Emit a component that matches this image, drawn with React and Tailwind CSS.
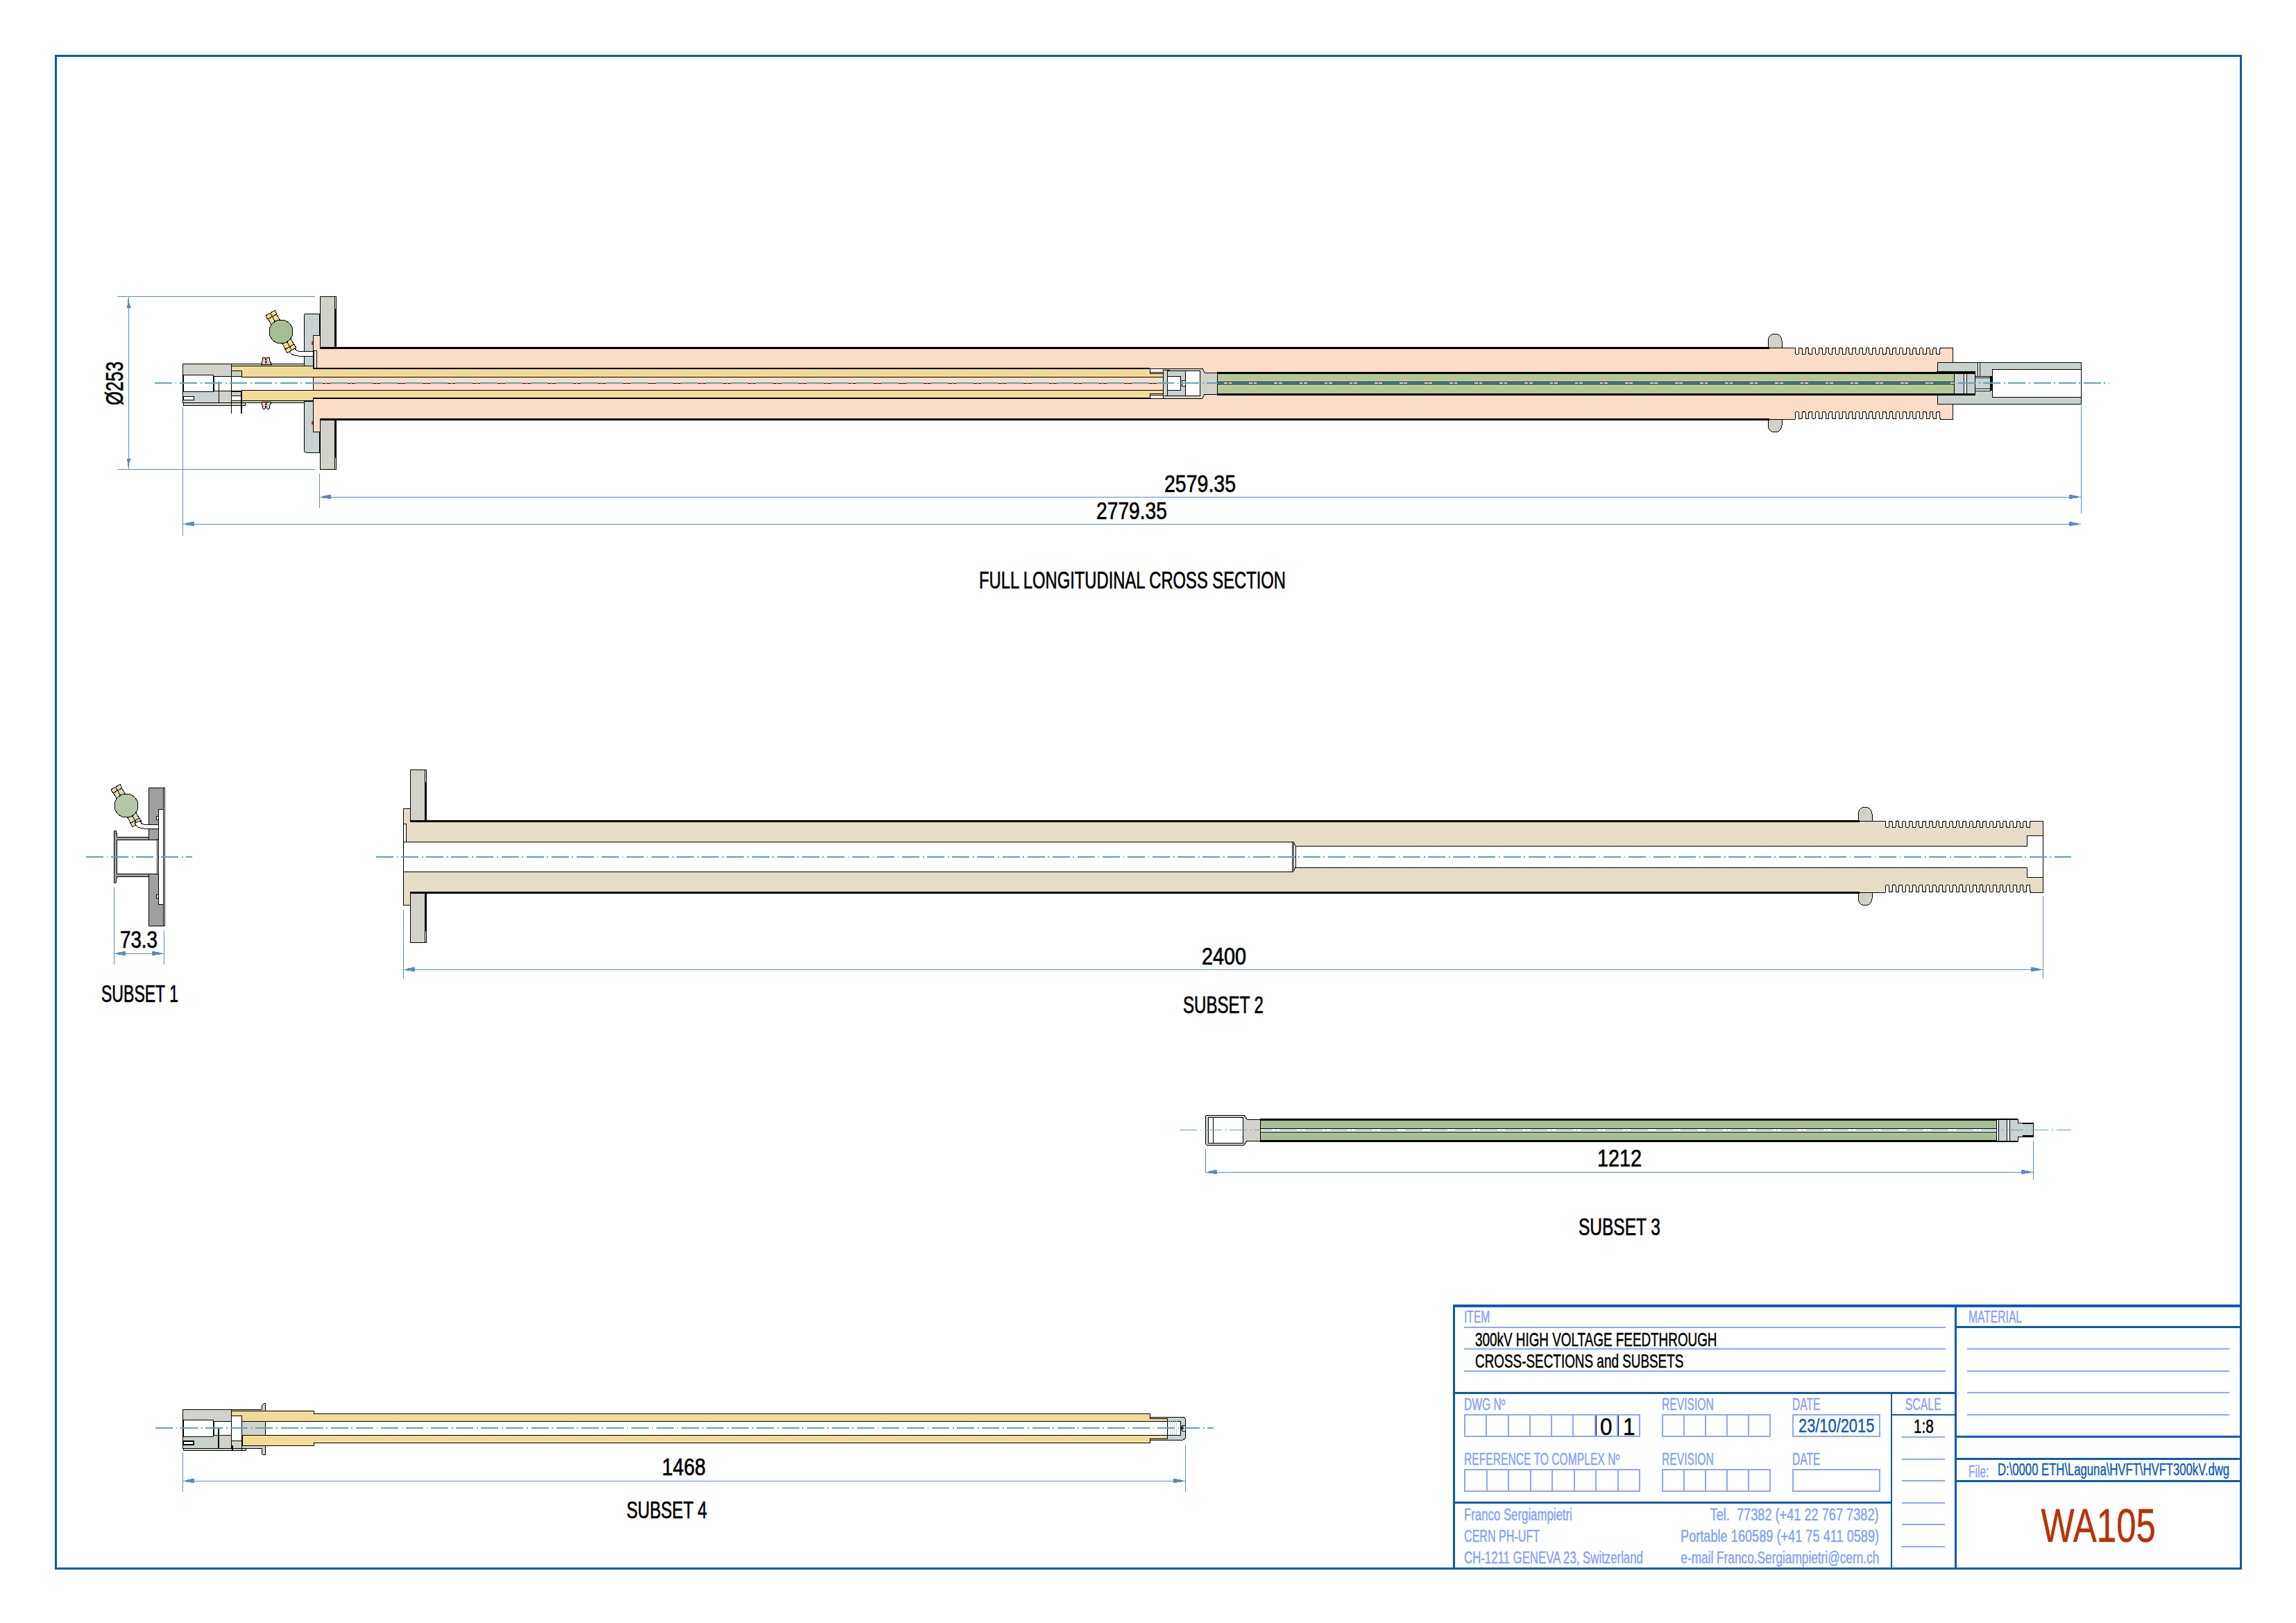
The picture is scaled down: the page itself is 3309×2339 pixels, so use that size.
const INK = "#000000";
const DIM = "#5b8cbf";
const AXIS = "#5ba3bb";
const PEACH = "#fbdcc8";
const YELLOW = "#f0dc96";
const GREEN = "#b4c896";
const OLIVE = "#a8bc96";
const GREY = "#d2d2ca";
const STEEL = "#c8d2d2";
const SAGE = "#c8d2ca";
const BEIGE = "#e6dcc8";

// thread profile, runs left to right, d is the signed depth
function teeth(x, y, n, p, d) {
  const r = p / 4;
  const s = d > 0 ? 1 : -1;
  let out = "";
  for (let i = 0; i < n; i++) {
    const a = x + i * p;
    out += ` L${a} ${y + d - s * r} A${r} ${r} 0 0 ${d > 0 ? 0 : 1} ${a + p / 2} ${y + d - s * r} L${a + p / 2} ${y + s * r}`;
    if (i < n - 1) out += ` A${r} ${r} 0 0 ${d > 0 ? 1 : 0} ${a + p} ${y + s * r}`;
    else out += ` L${a + p / 2 + 1} ${y}`;
  }
  return out;
}

function CenterLine({ x1, x2, y, w = 2 }) {
  return <line x1={x1} x2={x2} y1={y} y2={y} stroke={AXIS} strokeWidth={w} strokeDasharray="25 4.7 1.7 4.7" />;
}

function HDim({ x1, x2, y }) {
  return (
    <g fill={DIM}>
      <line x1={x1} x2={x2} y1={y} y2={y} stroke={DIM} strokeWidth="1" />
      <polygon points={`${x1},${y} ${x1 + 7},${y - 1} ${x1 + 7},${y - 2} ${x1 + 17},${y - 3} ${x1 + 17},${y + 3} ${x1 + 7},${y + 2}`} />
      <polygon points={`${x2},${y} ${x2 - 7},${y - 1} ${x2 - 7},${y - 2} ${x2 - 17},${y - 3} ${x2 - 17},${y + 3} ${x2 - 7},${y + 2}`} />
    </g>
  );
}

function Ext({ x, y1, y2 }) {
  return <line x1={x} x2={x} y1={y1} y2={y2} stroke={DIM} strokeWidth="1" />;
}

function Label({ x, y, w, size = 35, children }) {
  return (
    <text x={x} y={y} fontSize={size} fill={INK} stroke={INK} strokeWidth="0.7" textLength={w} lengthAdjust="spacingAndGlyphs">
      {children}
    </text>
  );
}

function Gauge({ x, y, fill, brass }) {
  return (
    <g transform={`translate(${x} ${y})`} stroke={INK} strokeWidth="1">
      {[-30, 150].map((a) => (
        <g key={a} transform={`rotate(${a})`}>
          <rect x="-7" y="-25" width="14" height="9" fill={brass} />
          <rect x="-7.5" y="-31" width="15" height="6" fill={brass} />
          <line x1="0" x2="0" y1="-31" y2="-16" />
        </g>
      ))}
      <circle r="17" fill={fill} />
    </g>
  );
}

// flanged body, shared by the full section and subset 2
function Body({ fill }) {
  const upper = `M451 552 V483 H461 V501 H2587${teeth(2587.5, 501, 22, 9.68, 10)} H2814 V552 Z`;
  const lower = `M451 552 V622 H461 V604 H2587${teeth(2587.5, 604, 22, 9.68, -11)} H2814 V552 Z`;
  return (
    <g>
      {/* seal humps */}
      <path d="M2548 501 V491 A10 10 0 0 1 2568 491 V501 Z" fill={GREY} stroke={INK} />
      <path d="M2548 604 V613 A10 10 0 0 0 2568 613 V604 Z" fill={GREY} stroke={INK} />
      <path d={upper} fill={fill} stroke={INK} />
      <path d={lower} fill={fill} stroke={INK} />
      {/* flange */}
      <rect x="461" y="427" width="23" height="74" fill="#ffffff" stroke={INK} />
      <rect x="461" y="427" width="21" height="74" fill={GREY} stroke={INK} />
      <rect x="482" y="445" width="2" height="56" fill={INK} />
      <rect x="461" y="604" width="23" height="72" fill="#ffffff" stroke={INK} />
      <rect x="461" y="604" width="21" height="72" fill={GREY} stroke={INK} />
      <rect x="482" y="604" width="2" height="56" fill={INK} />
      <rect x="461" y="500" width="2089" height="3" fill={INK} />
      <rect x="461" y="603" width="2089" height="3" fill={INK} />
    </g>
  );
}

function FullSection() {
  return (
    <svg className="absolute left-[130px] top-[410px] w-[2930px] h-[450px]" viewBox="130 410 2930 450" shapeRendering="crispEdges">
      <Body fill={PEACH} />

      {/* back flange */}
      <path d="M438 527 V456 Q438 452 442 452 H460 V483 H451 V527 Z" fill={STEEL} stroke={INK} />
      <path d="M438 578 V648 Q438 652 442 652 H460 V622 H451 V578 Z" fill={STEEL} stroke={INK} />
      <rect x="449" y="492" width="2" height="5" fill="#c83200" />
      <rect x="449" y="607" width="2" height="5" fill="#c83200" />
      <rect x="452" y="505" width="4" height="26" fill="#ffffff" stroke={INK} />

      {/* gauge and its pipe */}
      <Gauge x={405} y={478} fill={OLIVE} brass={YELLOW} />
      <path d="M417 507 Q421 513 430 513 H451 V506 H430 Q427 506 425 502 Z" fill="#ffffff" stroke={INK} />

      {/* outer sleeve */}
      <rect x="322" y="524" width="116" height="3" fill={GREY} stroke={INK} />
      <rect x="264" y="580" width="89" height="4" fill={GREY} stroke={INK} />
      <rect x="322" y="577" width="116" height="3" fill={GREY} stroke={INK} />
      <path d="M377 525 L378 520 L379 515 H382 L383 519 L385 515 H388 L389 520 L391 525 Z" fill={GREY} stroke={INK} />
      <path d="M377 579 L378 584 L379 589 H382 L383 585 L385 589 H388 L389 584 L391 579 Z" fill={GREY} stroke={INK} />
      <rect x="382" y="520" width="3" height="4" fill="#c83200" />
      <rect x="382" y="580" width="3" height="4" fill="#c83200" />

      {/* inner tube */}
      <path d="M333 527 H451 V531 H1657 V538 H1682 V543 H348 V534 H333 Z" fill={YELLOW} stroke={INK} />
      <path d="M348 562 H1682 V567 H1657 V574 H451 V577 H348 Z" fill={YELLOW} stroke={INK} />
      <rect x="451" y="530" width="1206" height="2" fill={INK} />
      <rect x="451" y="573" width="1206" height="2" fill={INK} />
      <rect x="333" y="534" width="15" height="8" fill={SAGE} stroke={INK} />
      <rect x="333" y="563" width="15" height="7" fill={SAGE} stroke={INK} />
      <rect x="333" y="570" width="1" height="26" fill={INK} />
      <rect x="334" y="570" width="14" height="1" fill={INK} />
      <rect x="347" y="563" width="2" height="33" fill={INK} />
      <rect x="334" y="563" width="15" height="2" fill={INK} />

      {/* left cap */}
      <rect x="263" y="524" width="70" height="56" fill={GREY} stroke={INK} />
      <rect x="264" y="564" width="52" height="16" fill={STEEL} />
      <rect x="264" y="540" width="43" height="24" fill="#ffffff" stroke={INK} />
      <rect x="308" y="542" width="25" height="21" fill="#ffffff" stroke={INK} />
      <rect x="315" y="550" width="1" height="30" fill={INK} />
      <rect x="264" y="571" width="15" height="5" fill="#ffffff" stroke={INK} />

      {/* coupling */}
      <path d="M1676 531 H1733 L1736 537 H1754 V568 H1736 L1733 574 H1676 Z" fill={GREY} stroke={INK} />
      <rect x="1657" y="531" width="19" height="5" fill="#ffffff" stroke={INK} />
      <rect x="1657" y="569" width="19" height="5" fill="#ffffff" stroke={INK} />
      <rect x="1682" y="534" width="26" height="36" fill={STEEL} stroke={INK} />
      <rect x="1682" y="542" width="19" height="20" fill="#ffffff" stroke={INK} />
      <rect x="1708" y="534" width="21" height="36" fill="#ffffff" stroke={INK} />
      <rect x="1703" y="548" width="5" height="8" fill="#ffffff" stroke={INK} />
      <rect x="1678" y="533" width="8" height="1" fill={INK} />
      <rect x="1678" y="570" width="8" height="1" fill={INK} />

      {/* end cap */}
      <rect x="2792" y="522" width="207" height="60" fill={SAGE} stroke={INK} />
      <rect x="2871" y="532" width="128" height="40" fill="#ffffff" stroke={INK} />
      <rect x="2850" y="522" width="3" height="20" fill="#ffffff" stroke={INK} />
      <rect x="2792" y="536" width="54" height="33" fill={SAGE} stroke={INK} strokeWidth="2" />
      <rect x="2816" y="538" width="14" height="29" fill={STEEL} stroke={INK} />
      <rect x="2830" y="538" width="4" height="29" fill="#ffffff" stroke={INK} />
      <rect x="2834" y="538" width="12" height="29" fill={STEEL} stroke={INK} />
      <rect x="2846" y="542" width="22" height="21" fill="#ffffff" stroke={INK} />
      <rect x="2846" y="544" width="22" height="16" fill={STEEL} stroke={INK} />
      <rect x="2868" y="542" width="3" height="21" fill={INK} />

      {/* ceramic core */}
      <rect x="1754" y="537" width="1062" height="31" fill={GREEN} stroke={INK} />
      <rect x="1754" y="551" width="1062" height="2" fill="#ffffff" />
      <rect x="1754" y="550" width="1062" height="1" fill={INK} />
      <rect x="1754" y="553" width="1062" height="1" fill={INK} />
      <rect x="1754" y="536" width="1092" height="3" fill={INK} />
      <rect x="1754" y="567" width="1092" height="3" fill={INK} />

      <CenterLine x1={223} x2={3040} y={552} />

      {/* dimensions */}
      <line x1="169" x2="454" y1="427" y2="427" stroke={DIM} />
      <line x1="169" x2="454" y1="676" y2="676" stroke={DIM} />
      <line x1="185" x2="185" y1="427" y2="676" stroke={DIM} />
      <polygon points="185,427 183,444 189,444 186,436" fill={DIM} />
      <polygon points="185,676 183,661 189,661 186,668" fill={DIM} />
      <text x="177" y="584" fontSize="35" fill={INK} stroke={INK} strokeWidth="0.7" textLength="63" lengthAdjust="spacingAndGlyphs" transform="rotate(-90 177 584)">Ø253</text>
      <Ext x={263} y1={587} y2={772} />
      <Ext x={460} y1={683} y2={732} />
      <Ext x={2999} y1={584} y2={740} />
      <HDim x1={460} x2={2999} y={716} />
      <HDim x1={263} x2={2999} y={755} />
      <Label x={1678} y={709} w={103}>2579.35</Label>
      <Label x={1580} y={748} w={102}>2779.35</Label>
      <Label x={1411} y={848} w={442}>FULL LONGITUDINAL CROSS SECTION</Label>
    </svg>
  );
}

function SubsetOne() {
  return (
    <svg className="absolute left-[110px] top-[1120px] w-[240px] h-[345px]" viewBox="110 1120 240 345" shapeRendering="crispEdges">
      <rect x="214" y="1135" width="23" height="199" fill="#a0a0a0" stroke={INK} />
      <rect x="235" y="1135" width="2" height="199" fill="#ffffff" stroke={INK} />
      <rect x="228" y="1166" width="7" height="137" fill="#ffffff" stroke={INK} />
      <rect x="225" y="1176" width="3" height="5" fill="#ffffff" stroke={INK} />
      <rect x="225" y="1289" width="3" height="5" fill="#ffffff" stroke={INK} />
      <path d="M164 1197 H167 L169 1206 H214 V1210 H168 V1259 H214 V1263 H169 L167 1272 H164 Z" fill="#a0a0a0" stroke={INK} />
      <rect x="168" y="1210" width="60" height="49" fill="#ffffff" stroke={INK} />
      <rect x="226" y="1209" width="2" height="51" fill="#ffffff" stroke={INK} />
      <Gauge x={182} y={1161} fill="#b4c8a8" brass="#ddd8b8" />
      <path d="M194 1186 Q198 1194 207 1194 H228 V1188 H207 Q204 1188 202 1183 Z" fill="#ffffff" stroke={INK} />
      <CenterLine x1={124} x2={277} y={1235} />
      <Ext x={164} y1={1279} y2={1390} />
      <Ext x={236} y1={1341} y2={1390} />
      <HDim x1={164} x2={236} y={1374} />
      <Label x={173} y={1366} w={54}>73.3</Label>
      <Label x={146} y={1444} w={111}>SUBSET 1</Label>
    </svg>
  );
}

function SubsetTwo() {
  return (
    <svg className="absolute left-[530px] top-[1100px] w-[2470px] h-[380px]" viewBox="530 1100 2470 380" shapeRendering="crispEdges">
      <g transform="translate(130 682)">
        <Body fill={BEIGE} />
      </g>
      <rect x="581" y="1187" width="4" height="26" fill="#ffffff" stroke={INK} />
      <path d="M581 1213 H1864 L1867 1219 H2921 V1204 H2944 V1264 H2921 V1250 H1867 L1864 1256 H581 Z" fill="#ffffff" stroke={INK} />
      <line x1="1862" x2="1862" y1="1213" y2="1256" stroke={INK} />
      <line x1="1864" x2="1864" y1="1213" y2="1256" stroke={INK} />
      <line x1="1867" x2="1867" y1="1219" y2="1250" stroke={INK} />
      <CenterLine x1={542} x2={2985} y={1235} />
      <Ext x={581} y1={1311} y2={1410} />
      <Ext x={2944} y1={1291} y2={1410} />
      <HDim x1={581} x2={2944} y={1397} />
      <Label x={1732} y={1390} w={64}>2400</Label>
      <Label x={1705} y={1460} w={116}>SUBSET 2</Label>
    </svg>
  );
}

function SubsetThree() {
  return (
    <svg className="absolute left-[1690px] top-[1595px] w-[1310px] h-[200px]" viewBox="1690 1595 1310 200" shapeRendering="crispEdges">
      <path d="M1737 1609 L1739 1607 H1793 L1797 1613 H1816 V1644 H1797 L1793 1650 H1739 L1737 1648 Z" fill={GREY} stroke={INK} />
      <rect x="1741" y="1610" width="50" height="37" fill="#ffffff" stroke={INK} />
      <line x1="1748" x2="1748" y1="1610" y2="1647" stroke={INK} />
      <rect x="1816" y="1613" width="1061" height="31" fill={OLIVE} stroke={INK} />
      <rect x="1816" y="1626" width="1061" height="5" fill="#ffffff" stroke={INK} />
      <rect x="1816" y="1612" width="1092" height="3" fill={INK} />
      <rect x="1816" y="1643" width="1092" height="3" fill={INK} />
      <rect x="2877" y="1613" width="3" height="31" fill="#ffffff" stroke={INK} />
      <rect x="2880" y="1613" width="12" height="31" fill={STEEL} stroke={INK} />
      <rect x="2892" y="1613" width="4" height="31" fill="#ffffff" stroke={INK} />
      <path d="M2896 1613 H2908 V1618 H2930 V1638 H2908 V1644 H2896 Z" fill={STEEL} stroke={INK} />
      <rect x="2915" y="1618" width="15" height="2" fill={INK} />
      <rect x="2915" y="1636" width="15" height="2" fill={INK} />
      <CenterLine x1={1700} x2={2985} y={1628} w={1} />
      <Ext x={1737} y1={1656} y2={1690} />
      <Ext x={2930} y1={1644} y2={1700} />
      <HDim x1={1737} x2={2930} y={1689} />
      <Label x={2302} y={1681} w={64}>1212</Label>
      <Label x={2275} y={1780} w={118}>SUBSET 3</Label>
    </svg>
  );
}

function SubsetFour() {
  return (
    <svg className="absolute left-[215px] top-[2010px] w-[1550px] h-[195px]" viewBox="215 2010 1550 195" shapeRendering="crispEdges">
      {/* sleeve and clamp flange */}
      <path d="M321 2031 H377 L378 2025 L381 2022 H382 V2096 H378 L377 2087 H321 Z" fill={GREY} stroke={INK} />
      <rect x="264" y="2087" width="90" height="3" fill={SAGE} stroke={INK} />
      {/* tube */}
      <path d="M333 2033 H452 V2037 H1657 V2044 H1682 V2048 H348 V2040 H333 Z" fill={YELLOW} stroke={INK} />
      <path d="M349 2068 H1682 V2073 H1657 V2079 H452 V2083 H349 Z" fill={YELLOW} stroke={INK} />
      {/* left cap */}
      <rect x="263" y="2031" width="70" height="56" fill={GREY} stroke={INK} />
      <rect x="264" y="2070" width="50" height="17" fill={SAGE} />
      <rect x="264" y="2046" width="43" height="24" fill="#ffffff" stroke={INK} />
      <rect x="308" y="2048" width="25" height="20" fill="#ffffff" stroke={INK} />
      <rect x="333" y="2040" width="15" height="36" fill="#ffffff" stroke={INK} />
      <rect x="314" y="2058" width="2" height="29" fill={INK} />
      <rect x="264" y="2077" width="15" height="5" fill="#ffffff" stroke={INK} strokeWidth="2" />
      <rect x="334" y="2083" width="2" height="7" fill={INK} />
      <rect x="348" y="2076" width="1" height="14" fill={INK} />
      {/* right cap */}
      <path d="M1657 2042 H1705 L1708 2044 V2073 L1705 2075 H1657 V2073 H1682 V2044 H1657 Z" fill={STEEL} stroke={INK} />
      <rect x="1682" y="2048" width="19" height="20" fill="#ffffff" stroke={INK} />
      {[1683, 1686, 1689, 1692, 1695].map((x) => (
        <line key={x} x1={x} x2={x} y1="2048" y2="2068" stroke="#c8d2d2" />
      ))}
      <rect x="1703" y="2054" width="5" height="8" fill="#ffffff" stroke={INK} />
      <rect x="1701" y="2056" width="5" height="4" fill={INK} />
      <CenterLine x1={224} x2={1749} y={2058} />
      <Ext x={263} y1={2093} y2={2150} />
      <Ext x={1708} y1={2082} y2={2150} />
      <HDim x1={263} x2={1708} y={2134} />
      <Label x={954} y={2126} w={63}>1468</Label>
      <Label x={903} y={2188} w={116}>SUBSET 4</Label>
    </svg>
  );
}

function Cells({ count, width, digits = {} }) {
  const cells = [];
  for (let i = 0; i < count; i++) {
    cells.push(
      <div
        key={i}
        className={`flex flex-1 justify-center border-[#8aa8ff] ${i < count - 1 ? "border-r-2" : ""} ${digits[i] ? "border-l border-l-[#000040]" : ""}`}
      >
        {digits[i] && <span className="pt-[1px] text-[35px] leading-[29px] text-black scale-x-[0.9] [-webkit-text-stroke:0.5px_#000]">{digits[i]}</span>}
      </div>
    );
  }
  return <div className={`flex h-[33px] border-2 border-[#8aa8ff] ${width}`}>{cells}</div>;
}

function Small({ children, className = "origin-left scale-x-[0.68]" }) {
  return <span className={`block whitespace-nowrap text-[23px] leading-none text-[#7f9fff] [-webkit-text-stroke:0.4px_#7f9fff] ${className}`}>{children}</span>;
}

function FieldLabel({ children, tall }) {
  return <div className={`flex items-end pb-[2px] ${tall ? "h-[46px]" : "h-[29px]"}`}><Small>{children}</Small></div>;
}

function TitleBlock() {
  return (
    <div className="flex w-[1134px] h-[379px] border-l-[3px] border-t-[4px] border-[#0a5ab4]">
      <div className="flex flex-col shrink-0 w-[723px] border-r-[3px] border-[#0a5ab4]">
        {/* item */}
        <div className="h-[125px] px-[13px] border-b-[3px] border-[#0a5ab4]">
          <div className="h-[30px] pt-[3px] border-b-2 border-[#8aa8ff]"><Small>ITEM</Small></div>
          <div className="h-[31px] pl-[16px] pt-[3px] border-b-2 border-[#8aa8ff]">
            <span className="block whitespace-nowrap text-[28px] leading-none text-black origin-left scale-x-[0.674] [-webkit-text-stroke:0.5px_#000]">300kV HIGH VOLTAGE FEEDTHROUGH</span>
          </div>
          <div className="h-[32px] pl-[16px] pt-[3px] border-b-2 border-[#8aa8ff]">
            <span className="block whitespace-nowrap text-[28px] leading-none text-black origin-left scale-x-[0.675] [-webkit-text-stroke:0.5px_#000]">CROSS-SECTIONS and SUBSETS</span>
          </div>
        </div>

        <div className="flex flex-1 min-h-0">
          <div className="flex flex-col shrink-0 w-[630px] border-r-[2px] border-[#0a5ab4]">
            {/* drawing numbers */}
            <div className="flex h-[158px] gap-[31px] pl-[13px] border-b-[3px] border-[#0a5ab4]">
              <div className="w-[254px]">
                <FieldLabel>DWG Nº</FieldLabel>
                <Cells count={8} width="w-[254px]" digits={{ 6: "0", 7: "1" }} />
                <FieldLabel tall>REFERENCE TO COMPLEX Nº</FieldLabel>
                <Cells count={8} width="w-[254px]" />
              </div>
              <div className="w-[157px]">
                <FieldLabel>REVISION</FieldLabel>
                <Cells count={5} width="w-[157px]" />
                <FieldLabel tall>REVISION</FieldLabel>
                <Cells count={5} width="w-[157px]" />
              </div>
              <div className="w-[127px]">
                <FieldLabel>DATE</FieldLabel>
                <div className="flex h-[33px] items-center pl-[7px] border-2 border-[#8aa8ff]">
                  <span className="block whitespace-nowrap text-[28px] leading-none text-[#0a5ab4] origin-left scale-x-[0.78] [-webkit-text-stroke:0.4px_#0a5ab4]">23/10/2015</span>
                </div>
                <FieldLabel tall>DATE</FieldLabel>
                <div className="h-[33px] border-2 border-[#8aa8ff]" />
              </div>
            </div>
            {/* contact */}
            <div className="flex flex-1 pt-[5px] pl-[13px] pr-[17px]">
              <div className="flex flex-col shrink-0 w-[298px] gap-[8px] items-start">
                <Small className="origin-left scale-x-[0.73]">Franco Sergiampietri</Small>
                <Small className="origin-left scale-x-[0.7]">CERN PH-UFT</Small>
                <Small className="origin-left scale-x-[0.73]">CH-1211 GENEVA 23, Switzerland</Small>
              </div>
              <div className="flex flex-col shrink-0 w-[300px] gap-[8px] items-end">
                <Small className="origin-right scale-x-[0.79]">Tel.&nbsp; 77382 (+41 22 767 7382)</Small>
                <Small className="origin-right scale-x-[0.79]">Portable 160589 (+41 75 411 0589)</Small>
                <Small className="origin-right scale-x-[0.75]">e-mail Franco.Sergiampietri@cern.ch</Small>
              </div>
            </div>
          </div>
          {/* scale */}
          <div className="flex flex-1 flex-col">
            <div className="flex h-[31px] items-end justify-center pb-[2px] border-b-2 border-[#0a5ab4]">
              <Small className="scale-x-[0.69]">SCALE</Small>
            </div>
            <div className="flex h-[32px] items-center justify-center pt-[2px] mx-[14px] border-b-2 border-[#8aa8ff]">
              <span className="block text-[28px] leading-none text-black scale-x-[0.74] [-webkit-text-stroke:0.5px_#000]">1:8</span>
            </div>
            <div className="h-[32px] mx-[14px] border-b-2 border-[#8aa8ff]" />
            <div className="h-[31px] mx-[14px] border-b-2 border-[#8aa8ff]" />
            <div className="h-[32px] mx-[14px] border-b-2 border-[#8aa8ff]" />
            <div className="h-[31px] mx-[14px] border-b-2 border-[#8aa8ff]" />
            <div className="h-[32px] mx-[14px] border-b-2 border-[#8aa8ff]" />
          </div>
        </div>
      </div>

      <div className="flex flex-1 min-w-0 flex-col">
        <div className="h-[30px] pt-[3px] pl-[17px] border-b-[3px] border-[#0a5ab4]"><Small>MATERIAL</Small></div>
        <div className="h-[31px] mx-[15px] border-b-2 border-[#8aa8ff]" />
        <div className="h-[32px] mx-[15px] border-b-2 border-[#8aa8ff]" />
        <div className="h-[31px] mx-[15px] border-b-2 border-[#8aa8ff]" />
        <div className="h-[32px] mx-[15px] border-b-2 border-[#8aa8ff]" />
        <div className="h-[32px] border-b-[3px] border-[#0a5ab4]" />
        <div className="h-[32px] border-b-[3px] border-[#0a5ab4]" />
        <div className="flex h-[32px] items-center pl-[17px] border-b-[3px] border-[#0a5ab4]">
          <Small className="shrink-0 w-[42px] mt-[6px] origin-left scale-x-[0.68]">File:</Small>
          <span className="block whitespace-nowrap text-[23px] leading-none text-[#0a5ab4] origin-left scale-x-[0.725] [-webkit-text-stroke:0.4px_#0a5ab4]">D:\0000 ETH\Laguna\HVFT\HVFT300kV.dwg</span>
        </div>
        <div className="flex flex-1 items-center justify-center">
          <span className="block text-[68px] leading-none text-[#b83208] scale-x-[0.75] [-webkit-text-stroke:0.5px_#b83208]">WA105</span>
        </div>
      </div>
    </div>
  );
}

export default function App() {
  return (
    <div className="relative w-[3309px] h-[2339px] bg-white pl-[79px] pt-[79px] font-['Liberation_Sans',Arial,sans-serif]">
      <div className="flex items-end justify-end w-[3152px] h-[2183px] border-[3px] border-[#0a5ab4]">
        <TitleBlock />
      </div>
      <FullSection />
      <SubsetOne />
      <SubsetTwo />
      <SubsetThree />
      <SubsetFour />
    </div>
  );
}
